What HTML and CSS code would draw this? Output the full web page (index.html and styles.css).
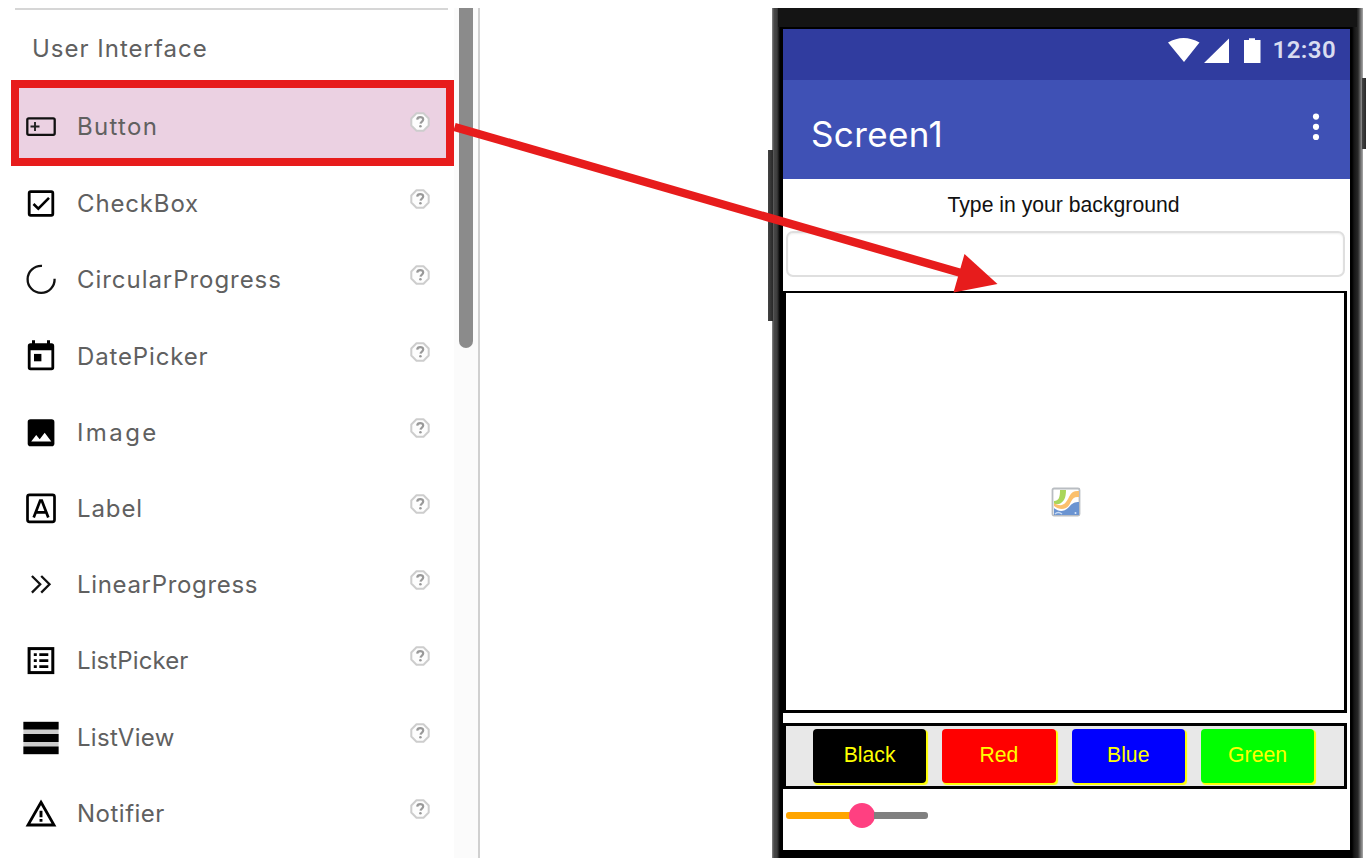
FILE: index.html
```html
<!DOCTYPE html>
<html lang="en">
<head>
<meta charset="utf-8">
<title>Designer</title>
<link rel="stylesheet" href="styles.css">
</head>
<body>
<svg class="defs" width="0" height="0">
  <symbol id="help" viewBox="0 0 20 20">
    <path d="M6.500 1.300h7L18.700 6.500v7L13.500 18.700h-7L1.300 13.500v-7z" fill="#fdfdfd" stroke="#cdcdcd" stroke-width="2" stroke-linejoin="round"/>
    <path d="M7.200 7.600c.2-2 1.400-2.500 3-2.500 1.800 0 3 .8 3 2.300 0 2.200-2.500 2-2.700 4.300" fill="none" stroke="#999" stroke-width="2.200"/>
    <circle cx="10.400" cy="14.200" r="1.300" fill="#999"/>
  </symbol>
</svg>
<main class="page">
  <section class="palette">
    <div class="list">
      <h2 class="category">User Interface</h2>
      <div class="item selected">
        <svg class="icon" viewBox="0 0 36 36"><rect x="4.300" y="9.300" width="27.400" height="16.500" rx="1.500" fill="none" stroke="#111" stroke-width="2.300"/><path d="M7.500 17.500h9M12 13v9" stroke="#222" stroke-width="1.900"/></svg>
        <span class="name w-button">Button</span><svg class="help"><use href="#help"/></svg>
      </div>
      <div class="item">
        <svg class="icon" viewBox="0 0 36 36"><rect x="6.200" y="5.700" width="23.600" height="23.600" rx="1.500" fill="none" stroke="#000" stroke-width="2.800"/><path d="M10.500 18l4.800 4.700L26 11.800" fill="none" stroke="#000" stroke-width="2.600"/></svg>
        <span class="name w-check">CheckBox</span><svg class="help"><use href="#help"/></svg>
      </div>
      <div class="item">
        <svg class="icon" viewBox="0 0 36 36"><path d="M19 3.900A13.500 13.500 0 1 0 31.600 16.800" fill="none" stroke="#111" stroke-width="2.300"/></svg>
        <span class="name w-circular">CircularProgress</span><svg class="help"><use href="#help"/></svg>
      </div>
      <div class="item">
        <svg class="icon" viewBox="0 0 36 36"><path d="M9 1.300h3v3h12v-3h3v3h1.500a2.700 2.700 0 0 1 2.700 2.700v21.500a2.700 2.700 0 0 1-2.700 2.700h-21a2.700 2.700 0 0 1-2.700-2.700V7a2.700 2.700 0 0 1 2.700-2.700H9zM7.600 11.300v17.200h20.800V11.300z" fill-rule="evenodd"/><path d="M11 14.900h7.400v7.400H11z"/></svg>
        <span class="name w-date">DatePicker</span><svg class="help"><use href="#help"/></svg>
      </div>
      <div class="item">
        <svg class="icon" viewBox="0 0 36 36"><rect x="4.700" y="4.200" width="26.700" height="27" rx="2.800"/><path d="M8.200 26.500l5-6.400 3.500 4.200 5-6.500 6.600 8.700z" fill="#fff"/></svg>
        <span class="name w-image">Image</span><svg class="help"><use href="#help"/></svg>
      </div>
      <div class="item">
        <svg class="icon" viewBox="0 0 36 36"><rect x="4.500" y="3.800" width="27" height="27" rx="2" fill="none" stroke="#000" stroke-width="2.700"/><path d="M10.700 26.600L17.200 9.500h1.600L25.300 26.600M12.700 21.300h10.700" fill="none" stroke="#000" stroke-width="2.700"/></svg>
        <span class="name w-label">Label</span><svg class="help"><use href="#help"/></svg>
      </div>
      <div class="item">
        <svg class="icon" viewBox="0 0 36 36"><path d="M8.900 9l8.300 8.300-8.300 8.300M18.200 9l8.300 8.300-8.300 8.300" fill="none" stroke="#111" stroke-width="2.300"/></svg>
        <span class="name w-linear">LinearProgress</span><svg class="help"><use href="#help"/></svg>
      </div>
      <div class="item">
        <svg class="icon" viewBox="0 0 36 36"><rect x="6.100" y="5.600" width="23.700" height="24" fill="none" stroke="#000" stroke-width="3"/><path d="M10.800 11.700h3M10.800 17.700h3M10.800 23.700h3M16.300 11.700h9M16.300 17.700h9M16.300 23.700h9" stroke="#000" stroke-width="2.800"/></svg>
        <span class="name w-picker">ListPicker</span><svg class="help"><use href="#help"/></svg>
      </div>
      <div class="item">
        <svg class="icon" viewBox="0 0 36 36"><path fill="#ccc" d="M.4 1h35.200v34H.4z"/><path d="M.4 2h35.200v7.500H.4zM.4 14h35.200v8H.4zM.4 26.500h35.200V34H.4z"/></svg>
        <span class="name w-view">ListView</span><svg class="help"><use href="#help"/></svg>
      </div>
      <div class="item">
        <svg class="icon" viewBox="0 0 36 36"><path d="M18 6.300L31 29H5z" fill="none" stroke="#000" stroke-width="2.800"/><path d="M18 14.700v6.600M18 23v2.800" stroke="#000" stroke-width="2.900"/></svg>
        <span class="name w-notifier">Notifier</span><svg class="help"><use href="#help"/></svg>
      </div>
    </div>
    <div class="scrollbar"><div class="thumb"></div></div>
  </section>

  <section class="phone">
    <i class="key volume"></i><i class="key power"></i>
    <div class="screen">
      <div class="status">
        <svg width="94" height="28" viewBox="0 0 94 28" fill="#fff"><path d="M0 5.500Q15.500-3.500 31.500 5.500L16 25zM36 26L61 1.500V26zM76 3h5V1.300h6V3h5.500v23H76z"/></svg>
        <span class="clock">12:30</span>
      </div>
      <div class="titlebar">
        <span class="title">Screen1</span>
        <svg class="more" width="8" height="28" viewBox="0 0 8 28" fill="#fff"><circle cx="4" cy="3.600" r="3.100"/><circle cx="4" cy="13.800" r="3.100"/><circle cx="4" cy="24" r="3.100"/></svg>
      </div>
      <div class="prompt">Type in your background</div>
      <div class="textbox"></div>
      <div class="canvas">
        <svg width="30" height="30" viewBox="0 0 30 30"><rect x="1.500" y="1.500" width="27" height="27" rx="1.500" fill="#fff" stroke="#b9bdc2" stroke-width="1.800"/><path d="M9 3h6c0 8-2 12-7 14H3v-3c5 0 6-4 6-11z" fill="#a9d65a"/><path d="M28 4v6c-9-1-7 8-13 11-4 2-8 1-12-2v-3c5 3 9 3 12-1 4-5 4-12 13-11z" fill="#fbc06d"/><path d="M3 21c6 5 11 3 15-1 3-4 6-5 10-5v13H3z" fill="#6b94d1"/><path d="M4 27q3-3 7 0" stroke="#c8dbf4" stroke-width="1.500" fill="none"/><circle cx="24.500" cy="26" r="1" fill="#d8e7fa"/></svg>
      </div>
      <div class="buttons">
        <div class="btn black">Black</div><div class="btn red">Red</div><div class="btn blue">Blue</div><div class="btn green">Green</div>
      </div>
      <div class="slider"><div class="filled"></div><div class="knob"></div><div class="rest"></div></div>
    </div>
  </section>

  <svg class="arrow" width="1367" height="862"><path d="M454.500 127L968 275" stroke="#e71c1c" stroke-width="8.300"/><path d="M997.500 284L964.500 254 953.500 292.500z" fill="#e71c1c"/></svg>
</main>
</body>
</html>
```

FILE: styles.css
```css
* { box-sizing: border-box; }
body { margin: 0; background: #fff; }
.defs { display: block; }
.page {
  position: relative;
  width: 1367px;
  height: 862px;
  padding: 8px 0 4px;
  display: flex;
  overflow: hidden;
  font-family: Inter, "Open Sans", sans-serif;
}
.palette {
  display: flex;
  width: 480px;
  margin-right: 292px;
  border-right: 2px solid #d0d0d0;
}
.list { width: 454px; padding-left: 11px; }
.category {
  height: 72px;
  margin: 0 6px 0 4px;
  padding: 0 0 0 17px;
  border-top: 2px solid #d6d6d6;
  font-size: 24px;
  font-weight: 400;
  line-height: 77px;
  letter-spacing: 1px;
  color: #606060;
  white-space: nowrap;
}
.item {
  display: flex;
  align-items: center;
  height: 76.22px;
  padding: 0 24px 0 12px;
}
.item.selected {
  height: 86px;
  padding: 7px 16px 0 4px;
  border: 8px solid #e71c1c;
  background: #ebd1e2;
}
.icon { width: 36px; height: 36px; flex: none; }
.name {
  flex: 1;
  padding-left: 18px;
  font-size: 24px;
  line-height: 36px;
  color: #606060;
  white-space: nowrap;
}
.w-button { letter-spacing: 1.3px; }
.w-check { letter-spacing: .85px; }
.w-circular { letter-spacing: .95px; }
.w-date { letter-spacing: .85px; }
.w-image { letter-spacing: 2.4px; }
.w-label { letter-spacing: .9px; }
.w-linear { letter-spacing: .67px; }
.w-picker { letter-spacing: .1px; }
.w-view { letter-spacing: .3px; }
.w-notifier { letter-spacing: .5px; }
.help { width: 20px; height: 20px; flex: none; margin-top: -10px; }
.scrollbar { width: 24px; padding-left: 5px; background: #fbfbfb; }
.thumb { width: 14px; height: 340px; border-radius: 0 0 7px 7px; background: #8b8b8b; }

.phone {
  position: relative;
  width: 591px;
  padding: 21px 13px 8px 11px;
  background: linear-gradient(90deg, #888 0, #484848 2px, #3d3d3d 5px, #000 8px, #000 580px, #151515 582px, #292929 586px, #777 589px, #aaa 591px);
}
.phone::before {
  content: "";
  position: absolute;
  left: 6px; right: 6px; top: 0;
  height: 19px;
  background: #141414;
}
.key { position: absolute; background: linear-gradient(90deg, #444, #292929); }
.volume { left: -4px; top: 142px; width: 5px; height: 171px; }
.power { left: 590px; top: 70px; width: 4px; height: 71px; }
.screen { display: flex; flex-direction: column; width: 567px; height: 821px; background: #fff; }
.status {
  display: flex;
  height: 51px;
  padding: 8px 14px 0 0;
  justify-content: flex-end;
  background: #303c9f;
}
.clock {
  margin-left: 11px;
  font: 600 24px/27px Roboto, sans-serif;
  letter-spacing: .4px;
  color: #d9dcf0;
}
.titlebar {
  display: flex;
  justify-content: space-between;
  height: 99px;
  padding: 33px 30px 0 28px;
  background: #3f51b5;
}
.title { font-size: 35px; line-height: 43px; letter-spacing: .4px; color: #fff; }
.prompt {
  height: 52px;
  padding-right: 6px;
  text-align: center;
  font: 21.200px/51px "Liberation Sans", Arial, sans-serif;
  color: #111;
}
.textbox {
  height: 46px;
  margin: 0 5px 14px 3px;
  border: 2px solid #dfdfdf;
  border-radius: 7px;
  box-shadow: inset 0 1px 2px #eee;
}
.canvas {
  display: flex;
  align-items: center;
  justify-content: center;
  height: 422px;
  margin: 0 3px 10px 0;
  padding: 1px 0 0 2px;
  border: 3px solid #000;
  border-width: 2.500px 3px 3px;
}
.buttons {
  display: flex;
  gap: 16px;
  height: 66px;
  margin-right: 3px;
  padding: 3px 0 0 27px;
  border: 3px solid #000;
  background: #e8e8e8;
}
.btn {
  width: 113.300px;
  height: 54px;
  border-radius: 4px;
  box-shadow: 1.500px 1.500px 1px #ff0;
  font: 21.200px/52px "Liberation Sans", Arial, sans-serif;
  text-align: center;
  color: #ff0;
}
.black { background: #000; }
.red { background: #f00; }
.blue { background: #00f; }
.green { background: #0f0; }
.slider { display: flex; align-items: center; height: 53px; margin-left: 3px; }
.filled { width: 64px; height: 7px; margin-right: -1px; border-radius: 3px 0 0 3px; background: #ffa500; }
.knob { width: 26px; height: 25px; border-radius: 50%; background: #ff4081; }
.rest { width: 54px; height: 7px; margin-left: -1px; border-radius: 0 3px 3px 0; background: #808080; }
.arrow { position: absolute; left: 0; top: 0; }
```
